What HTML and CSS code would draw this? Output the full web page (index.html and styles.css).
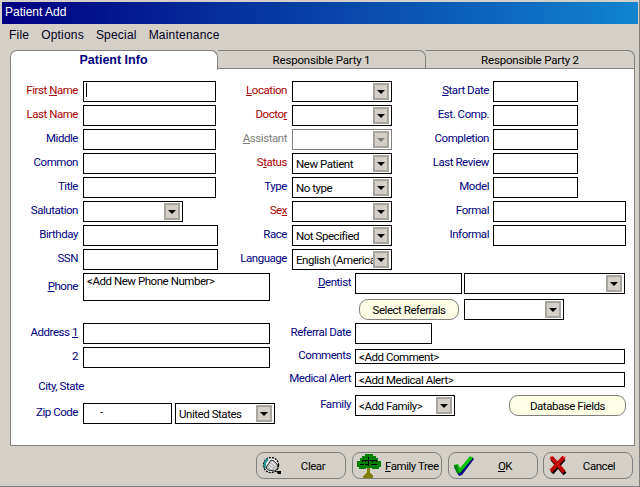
FILE: index.html
```html
<!DOCTYPE html>
<html lang="en">
<head>
    <meta charset="UTF-8">
    <title>Patient Add</title>
    <link rel="stylesheet" href="styles.css">
</head>
<body>
    <div class="window">
        <div class="titlebar">Patient Add</div>
        <div class="menubar">
            <span class="menu-item">File</span>
            <span class="menu-item">Options</span>
            <span class="menu-item">Special</span>
            <span class="menu-item">Maintenance</span>
        </div>

        <div class="panel">
            <div class="tabs">
                <div class="tab active">Patient Info</div>
                <div class="tab">Responsible Party 1</div>
                <div class="tab">Responsible Party 2</div>
            </div>
            <div class="panel-body">
                <div class="top-section">
                    <div class="col col-left">
                        <div class="row"><span class="label req">First <u>N</u>ame</span><div class="field w133"><i class="caret"></i></div></div>
                        <div class="row"><span class="label req">Last Name</span><div class="field w133"></div></div>
                        <div class="row"><span class="label">Middle</span><div class="field w133"></div></div>
                        <div class="row"><span class="label">Common</span><div class="field w133"></div></div>
                        <div class="row"><span class="label">Title</span><div class="field w133"></div></div>
                        <div class="row"><span class="label">Salutation</span><div class="select w100"><span class="value"></span><b class="drop"></b></div></div>
                        <div class="row"><span class="label">Birthday</span><div class="field w135"></div></div>
                        <div class="row"><span class="label">SSN</span><div class="field w135"></div></div>
                    </div>
                    <div class="col col-mid">
                        <div class="row"><span class="label req"><u>L</u>ocation</span><div class="select w100"><span class="value"></span><b class="drop"></b></div></div>
                        <div class="row"><span class="label req">Docto<u>r</u></span><div class="select w100"><span class="value"></span><b class="drop"></b></div></div>
                        <div class="row"><span class="label off"><u>A</u>ssistant</span><div class="select w100 disabled"><span class="value"></span><b class="drop"></b></div></div>
                        <div class="row"><span class="label req">S<u>t</u>atus</span><div class="select w100"><span class="value">New Patient</span><b class="drop"></b></div></div>
                        <div class="row"><span class="label">Type</span><div class="select w100"><span class="value">No type</span><b class="drop"></b></div></div>
                        <div class="row"><span class="label req">Se<u>x</u></span><div class="select w100"><span class="value"></span><b class="drop"></b></div></div>
                        <div class="row"><span class="label">Race</span><div class="select w100"><span class="value">Not Specified</span><b class="drop"></b></div></div>
                        <div class="row"><span class="label">Language</span><div class="select w100"><span class="value">English (America</span><b class="drop"></b></div></div>
                    </div>
                    <div class="col col-right">
                        <div class="row"><span class="label"><u>S</u>tart Date</span><div class="field w85"></div></div>
                        <div class="row"><span class="label">Est. Comp.</span><div class="field w85"></div></div>
                        <div class="row"><span class="label">Completion</span><div class="field w85"></div></div>
                        <div class="row"><span class="label">Last Review</span><div class="field w85"></div></div>
                        <div class="row"><span class="label">Model</span><div class="field w85"></div></div>
                        <div class="row"><span class="label">Formal</span><div class="field w133"></div></div>
                        <div class="row"><span class="label">Informal</span><div class="field w133"></div></div>
                    </div>
                </div>

                <div class="bottom-section">
                    <div class="col col-addr">
                        <div class="row phone-row"><span class="label"><u>P</u>hone</span><div class="field w187 tall">&lt;Add New Phone Number&gt;</div></div>
                        <div class="row"><span class="label">Address <u>1</u></span><div class="field w187"></div></div>
                        <div class="row"><span class="label">2</span><div class="field w187"></div></div>
                        <div class="row city-row"><span class="label">City, State</span></div>
                        <div class="row"><span class="label">Zip Code</span><div class="field w89 zip">-</div><div class="select w100 country"><span class="value">United States</span><b class="drop"></b></div></div>
                    </div>
                    <div class="col col-other">
                        <div class="row row-a"><span class="label"><u>D</u>entist</span><div class="field w107"></div><div class="select w161 tight"><span class="value"></span><b class="drop"></b></div></div>
                        <div class="row row-b"><button class="pill referrals">Select Referrals</button><div class="select w100"><span class="value"></span><b class="drop"></b></div></div>
                        <div class="row row-a"><span class="label">Referral Date</span><div class="field w77"></div></div>
                        <div class="row row-thin"><span class="label">Comments</span><div class="field w270 thin">&lt;Add Comment&gt;</div></div>
                        <div class="row row-thin"><span class="label">Medical Alert</span><div class="field w270 thin">&lt;Add Medical Alert&gt;</div></div>
                        <div class="row"><span class="label">Family</span><div class="select w100"><span class="value">&lt;Add Family&gt;</span><b class="drop"></b></div><button class="pill database">Database Fields</button></div>
                    </div>
                </div>
            </div>
        </div>

        <div class="footer">
            <button class="action">
                <svg class="icon" width="20" height="18" viewBox="0 0 20 18">
                    <circle cx="9" cy="8" r="7.5" fill="#fff" stroke="#000" stroke-width="1.4" stroke-dasharray="2 1"/>
                    <path d="M3 11C2 7 3 4 6 2" fill="none" stroke="#2a8f8f" stroke-width="2.5"/>
                    <path d="M6 13C4 12 4 10 5 9L9 3L12 4L15 7L16 11L13 14Z" fill="#c0c0c0" stroke="#303030"/>
                    <path d="M8 7L11 10M10 5L14 9M7 9L10 12" stroke="#fff"/>
                    <path d="M14 14h5v3h-3z" fill="#000"/>
                </svg>
                <span class="action-text">Clear</span>
            </button>
            <button class="action">
                <svg class="icon tree" width="24" height="24" viewBox="0 0 24 24" shape-rendering="crispEdges">
                    <path d="M8 0h8v2h3v2h2v3h3v6h-2v2h-7v-1H9v1H2v-2H0V7h3V4h2V2h3z" fill="#008000"/>
                    <path d="M10 14h3v5l3 3v2H6v-2l4-3z" fill="#808000"/>
                    <path d="M11 3v9M5 8V6h14v2M8 6v2M15 6v2M3 10h4M8 10h3M14 10h6" fill="none" stroke="#000" stroke-width="1"/>
                </svg>
                <span class="action-text"><u>F</u>amily Tree</span>
            </button>
            <button class="action">
                <svg class="icon" width="20" height="20" viewBox="0 0 20 20">
                    <path d="M0 11L2 15L5 20L8 19L20 3L18 1L6 14L4 11Z" fill="#000080"/>
                    <path d="M0 9L4 8L6 12L16 0L19 2L6 17L3 17Z" fill="#00c000"/>
                    <path d="M0 9L3 17L5 17L3 9Z" fill="#008000"/>
                </svg>
                <span class="action-text"><u>O</u>K</span>
            </button>
            <button class="action">
                <svg class="icon" width="18" height="19" viewBox="0 0 18 19">
                    <path d="M3 3L16 18M15 3L3 17" stroke="#000" stroke-width="4" fill="none"/>
                    <path d="M2 1L15 16M15 1L2 15" stroke="#c00000" stroke-width="4" fill="none"/>
                    <path d="M1 1L4 0M14 1L17 1" stroke="#ff6060" stroke-width="1" fill="none"/>
                </svg>
                <span class="action-text">Cancel</span>
            </button>
        </div>
    </div>
</body>
</html>
```

FILE: styles.css
```css
* {
    box-sizing: border-box;
}

body {
    margin: 0;
    font-family: Roboto, "Liberation Sans", Arial, sans-serif;
    font-size: 11.5px;
    letter-spacing: -0.45px;
    color: #000;
}

.window {
    width: 640px;
    height: 487px;
    padding: 2px 1px 1px 2px;
    background-color: #d4d0c8;
    border-right: 1px solid #808080;
    border-bottom: 1px solid #808080;
    overflow: hidden;
}

.titlebar {
    height: 22px;
    padding: 0 3px;
    line-height: 21px;
    font-family: "Liberation Sans", Arial, sans-serif;
    font-size: 12px;
    letter-spacing: 0;
    color: #fff;
    background: linear-gradient(to right, #000080, #1084d0);
}

.menubar {
    display: flex;
    height: 22px;
    align-items: center;
    font-family: "Liberation Sans", Arial, sans-serif;
    font-size: 12px;
    letter-spacing: 0.2px;
    color: #000020;
}

.menu-item {
    margin-left: 7px;
    margin-right: 5px;
}

.panel {
    width: 625px;
    height: 396px;
    margin: 4px 0 0 8px;
}

.tabs {
    display: flex;
    height: 19px;
}

.tab {
    width: 208px;
    height: 19px;
    text-align: center;
    line-height: 18px;
    letter-spacing: -0.2px;
    border: 1px solid #808080;
    border-left-width: 0;
    border-radius: 0 7px 0 0;
    background-color: #d4d0c8;
}

.tab:last-child {
    width: 209px;
}

.tab.active {
    position: relative;
    z-index: 1;
    height: 20px;
    padding-right: 1px;
    font-family: "Liberation Sans", Arial, sans-serif;
    font-size: 12.5px;
    font-weight: bold;
    letter-spacing: 0;
    color: #000080;
    background-color: #fff;
    border-left-width: 1px;
    border-bottom: 0;
    border-radius: 7px 7px 0 0;
}

.panel-body {
    height: 377px;
    padding-top: 12px;
    background-color: #fff;
    border: 1px solid #808080;
    border-top: 0;
}

.top-section,
.bottom-section {
    display: flex;
}

.col {
    display: flex;
    flex-direction: column;
}

.col-left {
    width: 207px;
}

.col-mid {
    width: 174px;
}

.col-addr {
    width: 264px;
}

.row {
    display: flex;
    height: 21px;
    margin-bottom: 3px;
    align-items: flex-start;
}

.label {
    flex: none;
    height: 21px;
    line-height: 18px;
    text-align: right;
    white-space: nowrap;
    color: #000080;
}

.label.req {
    color: #aa0000;
}

.label.off {
    color: #808080;
}

.col-left .label,
.col-addr .label {
    width: 67px;
    margin-right: 5px;
}

.col-mid .label {
    width: 69px;
    margin-right: 5px;
}

.col-right .label {
    width: 97px;
    margin-right: 4px;
}

.col-other .label {
    width: 76px;
    margin-right: 4px;
}

.field,
.select {
    flex: none;
    height: 21px;
    background-color: #fff;
    border: 1px solid #000;
}

.field {
    padding: 0 3px;
    white-space: nowrap;
    line-height: 17px;
}

.w77 { width: 77px; }
.w85 { width: 85px; }
.w89 { width: 89px; }
.w100 { width: 100px; }
.w107 { width: 107px; }
.w133 { width: 133px; }
.w135 { width: 135px; }
.w161 { width: 161px; }
.w187 { width: 187px; }
.w270 { width: 270px; }

.caret {
    display: block;
    width: 1px;
    height: 14px;
    margin: 1px 0 0 -1px;
    background-color: #000;
}

.field.tall {
    height: 28px;
    line-height: 14px;
}

.field.thin {
    height: 15px;
    line-height: 14px;
}

.field.zip {
    padding-left: 16px;
}

.select {
    display: flex;
    align-items: center;
    padding: 0 2px 0 3px;
}

.select .value {
    flex: 1;
    min-width: 0;
    white-space: nowrap;
}

.drop {
    display: flex;
    flex: none;
    width: 16px;
    height: 17px;
    align-items: center;
    justify-content: center;
    background-color: #d4d0c8;
    border: 2px solid #a8a59e;
}

.drop::after {
    content: "";
    border-top: 4px solid #000;
    border-left: 4px solid transparent;
    border-right: 4px solid transparent;
}

.select.disabled {
    border-color: #808080;
}

.select.disabled .drop::after {
    border-top-color: #808080;
}

.select.tight {
    margin-left: 2px;
}

.select.country {
    margin-left: 3px;
}

.phone-row {
    height: 28px;
    margin-bottom: 22px;
}

.phone-row .label {
    height: 28px;
    line-height: 27px;
}

.city-row {
    height: 29px;
    margin-bottom: 3px;
    align-items: flex-end;
}

.city-row .label {
    width: 73px;
    line-height: 14px;
}

.row-a {
    margin-bottom: 5px;
}

.row-b {
    margin-bottom: 3px;
    padding-left: 84px;
}

.row-thin {
    height: 15px;
    margin-bottom: 8px;
}

.row-thin .label {
    height: 15px;
    line-height: 13px;
}

.pill {
    flex: none;
    height: 21px;
    padding: 0;
    font: inherit;
    letter-spacing: inherit;
    color: #000;
    background-color: #ffffe6;
    border: 1px solid #808080;
    border-radius: 9px;
}

.referrals {
    width: 100px;
    margin-right: 5px;
}

.database {
    width: 117px;
    margin-left: 54px;
}

.footer {
    display: flex;
    gap: 6px;
    margin: 6px 0 0 254px;
}

.action {
    display: flex;
    width: 90px;
    height: 27px;
    padding: 0 4px 0 5px;
    align-items: center;
    font: inherit;
    letter-spacing: inherit;
    color: #000;
    background-color: #d4d0c8;
    border: 1px solid #808080;
    border-radius: 8px;
}

.action:last-child {
    margin-left: -1px;
}

.icon {
    flex: none;
}

.icon.tree {
    margin: 0 1px 0 -1px;
}

.action-text {
    flex: 1;
    padding-left: 3px;
    text-align: center;
    white-space: nowrap;
}
```
